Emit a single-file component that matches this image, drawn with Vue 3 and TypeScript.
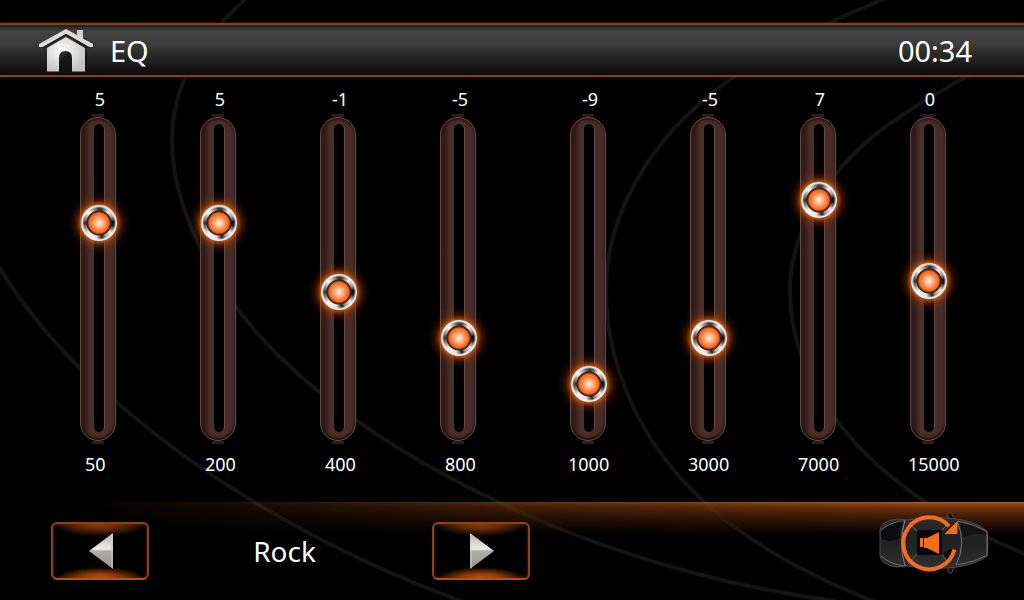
<script setup lang="ts">
import { ref } from 'vue'

interface Band {
  frequency: number
  gain: number
}

const bands = ref<Band[]>([
  { frequency: 50, gain: 5 },
  { frequency: 200, gain: 5 },
  { frequency: 400, gain: -1 },
  { frequency: 800, gain: -5 },
  { frequency: 1000, gain: -9 },
  { frequency: 3000, gain: -5 },
  { frequency: 7000, gain: 7 },
  { frequency: 15000, gain: 0 },
])

const presets = ['Rock', 'Pop', 'Jazz', 'Classic']
const presetIndex = ref(0)

function stepPreset(delta: number) {
  presetIndex.value = (presetIndex.value + delta + presets.length) % presets.length
}
</script>

<template>
  <div class="screen">
    <svg class="arcs" viewBox="0 0 1024 600" preserveAspectRatio="xMidYMid slice" aria-hidden="true">
      <path d="M247 -2C196 42 172 90 172 140C172 205 210 284 268 345C340 420 440 480 560 529C655 566 740 588 835 601" />
      <path d="M-4 262C40 336 105 399 190 460C275 520 370 568 466 603" />
      <path d="M892 -4C830 20 775 48 728 81C650 137 606 215 606 290C606 360 636 432 688 486C735 536 800 572 875 602" />
      <path d="M1030 46C970 72 930 96 895 120C830 164 790 230 790 290C790 350 816 402 862 450C905 494 960 528 1030 556" />
    </svg>

    <header class="topbar">
      <button class="icon-button" type="button" aria-label="Home">
        <svg width="58" height="46" viewBox="37 28 58 46">
          <defs>
            <radialGradient id="home-fill" cx="0.4" cy="0.4" r="0.65">
              <stop offset="0" stop-color="#ffffff" />
              <stop offset="1" stop-color="#c4c2c1" />
            </radialGradient>
          </defs>
          <path d="M79 38h8v36h-37z" fill="#0c1016" opacity="0.6" />
          <path d="M77 38V30h6v11z" fill="#d2d0cf" />
          <path d="M66 37L85 48V71.500H72V58Q72 51 65.500 51Q59 51 59 58V71.500H47V48Z" fill="url(#home-fill)" />
          <path d="M66 29L93 44V47H89L66 34L43 47H39V44Z" fill="#dddbda" />
          <path d="M43 48L66 35L89 48" fill="none" stroke="#222" stroke-width="2" />
        </svg>
      </button>
      <h1 class="title">EQ</h1>
      <time class="clock">00:34</time>
    </header>

    <main class="bands">
      <div v-for="(band, index) in bands" :key="band.frequency" class="band">
        <output class="gain" :for="'band-' + index">{{ band.gain }}</output>
        <span class="nub"></span>
        <div class="rail">
          <span class="slot"></span>
          <input :id="'band-' + index" v-model.number="band.gain" class="slider" type="range" min="-12" max="12" />
        </div>
        <span class="nub"></span>
        <label class="frequency" :class="{ wide: band.frequency >= 1000 }" :for="'band-' + index">{{ band.frequency }}</label>
      </div>
    </main>

    <footer class="bottombar">
      <button class="step" type="button" aria-label="Previous preset" @click="stepPreset(-1)">
        <svg width="24" height="36" viewBox="0 0 24 36">
          <defs>
            <linearGradient id="arrow-fill" x1="0" y1="0" x2="0" y2="1">
              <stop offset="0" stop-color="#b5b3b2" />
              <stop offset="0.45" stop-color="#ececeb" />
              <stop offset="0.5" stop-color="#b0aeac" />
              <stop offset="1" stop-color="#969390" />
            </linearGradient>
          </defs>
          <path d="M24 0V36L0 18Z" fill="url(#arrow-fill)" />
          <path d="M23 1V35" stroke="#d0cecd" />
        </svg>
      </button>
      <span class="preset">{{ presets[presetIndex] }}</span>
      <button class="step" type="button" aria-label="Next preset" @click="stepPreset(1)">
        <svg width="24" height="36" viewBox="0 0 24 36">
          <path d="M0 0V36L24 18Z" fill="url(#arrow-fill)" />
          <path d="M1 1V35" stroke="#d0cecd" />
        </svg>
      </button>

      <button class="icon-button sound-field" type="button" aria-label="Sound field">
        <svg width="112" height="64" viewBox="878 511 112 64">
          <defs>
            <linearGradient id="car-body" x1="0" y1="0" x2="0" y2="1">
              <stop offset="0" stop-color="#2b2b2b" />
              <stop offset="0.5" stop-color="#202020" />
              <stop offset="1" stop-color="#303030" />
            </linearGradient>
          </defs>
          <g stroke="#4c4c4c" stroke-width="1">
            <path d="M948 521L948 515Q949 511 952 514L955 521M948 565L948 571Q949 575 952 572L955 564" fill="#111" />
            <path d="M880 530Q881 521 897 519L908 520L920 518H948Q975 520 987 531Q989 543 987 556Q975 566 948 568H920L908 566L897 567Q881 565 880 556Z" fill="url(#car-body)" />
            <path d="M905 520Q898 543 905 566" fill="none" stroke="#858585" />
            <path d="M957 521Q967 543 956 565" fill="none" stroke="#777" />
            <path d="M881 530Q890 522 904 521M881 556Q890 564 904 566M957 521Q975 524 987 532V555Q975 562 956 565" fill="none" stroke="#707070" />
            <path d="M908 522L917 531M908 564L917 554M949 523L941 531M949 563L941 554" fill="none" stroke="#666" />
          </g>
          <path d="M881 531Q890 523 903 521Q900 530 900 538Q891 543 881 539Z" fill="#0c0c0e" />
          <path d="M963 538Q974 532 986 535V532Q975 526 960 523Z" fill="#141414" />
          <path d="M917 530H942V555H917Z" fill="#050505" />
          <path d="M943 553Q948 549 954 549Q954 556 948 561Z" fill="#080808" />
          <path d="M949 526.300A26 26 0 1 0 954.500 549.600" fill="none" stroke="#f36d1a" stroke-width="4" />
          <path d="M957 522V533.500H945.500Z" fill="#f36d1a" stroke="#f36d1a" />
          <path d="M920 538H923V547H920ZM924 538H927L939 532V554L927 548H924Z" fill="#f36d1a" />
        </svg>
      </button>
    </footer>
  </div>
</template>

<style>
body {
  margin: 0;
  background: #000;
}
</style>

<style scoped>
.screen {
  position: relative;
  isolation: isolate;
  display: flex;
  flex-direction: column;
  box-sizing: border-box;
  min-height: 100vh;
  padding-top: 23px;
  overflow: hidden;
  background: #000;
  color: #fff;
  font-family: "Noto Sans", "Open Sans", sans-serif;
}

.arcs {
  position: absolute;
  inset: 0;
  z-index: -1;
  width: 100%;
  height: 100%;
  fill: none;
  stroke: #141414;
  stroke-width: 4;
}

.topbar {
  display: flex;
  align-items: center;
  box-sizing: border-box;
  height: 54px;
  padding: 2px 52px 0 37px;
  border-top: 2px solid #8a4011;
  border-bottom: 2px solid #8a4011;
  background: linear-gradient(#1c1c1c, #424242 12%, #3e3e3e 35%, #272727 62%, #121212 90%, #0c0908);
  box-shadow: 0 0 2px #5a2808;
}

.icon-button {
  display: flex;
  padding: 0;
  border: 0;
  background: none;
  cursor: pointer;
}

.title {
  margin: 0 auto 0 15px;
  font-size: 29px;
  font-weight: 400;
  line-height: 40px;
}

.clock {
  font-size: 29px;
  line-height: 40px;
}

.bands {
  display: grid;
  flex: 1;
  grid-template-columns: 6fr 6fr 6fr 6fr 7fr 5fr 6fr 5fr;
  align-items: start;
  padding: 10px 46px 12px 38px;
}

.band {
  display: flex;
  flex-direction: column;
  align-items: center;
  font-size: 18px;
  line-height: 24px;
}

.gain {
  padding: 0 0 3px 4px;
}

.nub {
  width: 12px;
  height: 3px;
  background: #2e1d1b;
}

.rail {
  display: grid;
  justify-items: center;
  align-items: start;
  box-sizing: border-box;
  width: 36px;
  height: 324px;
  border: 1px solid #6c4b45;
  border-radius: 18px;
  background: linear-gradient(90deg, #38211f, #2c1a18 10%, #4b2f2b 28%, #482c29 60%, #452a27);
  box-shadow: inset 0 -2px 2px #1c100f, inset 0 2px 2px #2a1917;
}

.slot,
.slider {
  grid-area: 1 / 1;
}

.slot {
  box-sizing: border-box;
  width: 11px;
  height: 308px;
  margin-top: 6px;
  border-right: 1px solid #6b4a43;
  border-radius: 6px;
  background: #000;
}

.slider {
  width: 36px;
  height: 311px;
  margin: 7px 0 0;
  appearance: none;
  background: transparent;
  cursor: pointer;
  direction: rtl;
  writing-mode: vertical-lr;
}

.slider::-webkit-slider-thumb {
  width: 36px;
  height: 36px;
  border-radius: 50%;
  appearance: none;
  background:
    radial-gradient(circle, #fff1e4 0, #ffb98c 4px, #ff7a33 8px, #f3611a 10px, #7a2c08 11px, #2a1a12 12px, transparent 13px),
    radial-gradient(circle, transparent 15px, #f2f2f2 17px),
    conic-gradient(#333 0deg, #444 12deg, #eee 40deg, #999 65deg, #0a0a0a 85deg, #222 100deg, #e8e8e8 130deg, #999 155deg, #1a1a1a 168deg, #ddd 190deg, #fff 225deg, #888 250deg, #333 270deg, #777 285deg, #fff 315deg, #aaa 335deg, #333 360deg);
  box-shadow: 0 0 4px 1px #e8620e, 0 0 12px 3px #a84206;
}

.frequency {
  box-sizing: border-box;
  width: 40px;
  margin-top: 8px;
  padding-left: 7px;
  white-space: nowrap;
}

.frequency.wide {
  padding-left: 0;
}

.bottombar {
  position: relative;
  display: flex;
  align-items: center;
  box-sizing: border-box;
  height: 98px;
  padding: 0 34px 0 51px;
}

.bottombar::before {
  content: "";
  position: absolute;
  inset: 0 0 auto;
  z-index: -1;
  height: 32px;
  background: linear-gradient(#a3623a 0, #8a4414 2px, #6d300a 6px, #3a1905 16px, transparent);
  mask-image: linear-gradient(90deg, transparent 8%, rgb(0 0 0 / 25%) 30%, rgb(0 0 0 / 55%) 50%, #000 90%);
}

.step {
  display: flex;
  align-items: center;
  justify-content: center;
  width: 98px;
  height: 58px;
  padding: 0 0 0 2px;
  border: 2px solid #8f420f;
  border-bottom-color: #b8510f;
  border-radius: 6px;
  background:
    radial-gradient(ellipse 46px 13px at 50% 100%, #f56a10, #8c3a08 50%, transparent),
    radial-gradient(ellipse 50px 15px at 50% 0, #a34a10, #5e2807 50%, transparent),
    #000;
  background-origin: border-box;
  box-shadow: inset 0 0 3px #6b2f08;
  cursor: pointer;
}

.preset {
  box-sizing: border-box;
  width: 283px;
  padding-right: 12px;
  font-size: 28px;
  line-height: 36px;
  text-align: center;
}

.sound-field {
  margin-left: auto;
  padding-bottom: 16px;
}
</style>
